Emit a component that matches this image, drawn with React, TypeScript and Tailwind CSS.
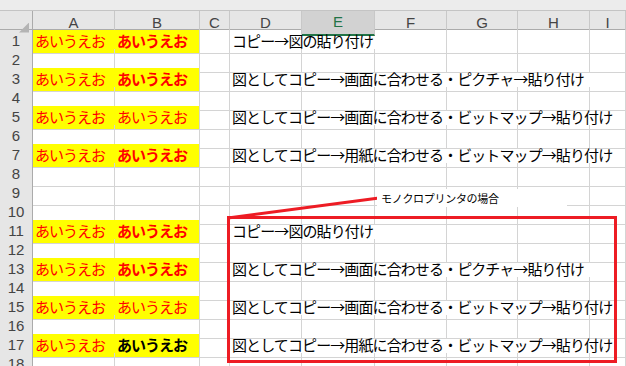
import React from "react";

const COLS = "33px 82px 85px 30px 72px 73px 72px 71px 72px 1fr";
const LETTERS = ["A", "B", "C", "D", "E", "F", "G", "H", "I"];
const FONT = { fontFamily: '"Noto Sans CJK JP", "Noto Sans", sans-serif' };

const TEXTS: Record<string, string> = {
  copy: "コピー→図の貼り付け",
  pict: "図としてコピー→画面に合わせる・ピクチャ→貼り付け",
  bmp: "図としてコピー→画面に合わせる・ビットマップ→貼り付け",
  paper: "図としてコピー→用紙に合わせる・ビットマップ→貼り付け",
};

interface RowSpec {
  b?: "bold" | "regular" | "black";
  d?: keyof typeof TEXTS;
}

const ROWS: Record<number, RowSpec> = {
  1: { b: "bold", d: "copy" },
  3: { b: "bold", d: "pict" },
  5: { b: "regular", d: "bmp" },
  7: { b: "bold", d: "paper" },
  11: { b: "bold", d: "copy" },
  13: { b: "bold", d: "pict" },
  15: { b: "regular", d: "bmp" },
  17: { b: "black", d: "paper" },
};

const cell = "border-r border-b border-[#d4d4d4]";

const Row = ({ n }: { n: number }) => {
  const spec = ROWS[n];
  const short = spec?.d === "copy";
  return (
    <div className="grid h-[19px]" style={{ gridTemplateColumns: COLS }}>
      <div className="flex items-center justify-center bg-[#e6e6e6] border-r border-r-[#ababab] border-b border-b-[#cfcfcf] text-[15px] text-[#444]" style={{ fontFamily: '"Liberation Sans", sans-serif' }}>
        {n}
      </div>
      {spec ? (
        <>
          <div className="flex items-center bg-[#ffff00] border-b border-[#d4d4d4] pl-[2px] text-[15px] tracking-[-1px] text-[#ff0000]" style={FONT}>
            あいうえお
          </div>
          <div
            className={`flex items-center bg-[#ffff00] ${cell} pl-[2px] text-[15px] tracking-[-1px] ${
              spec.b === "regular" ? "text-[#ff0000]" : spec.b === "black" ? "font-bold text-black" : "font-bold text-[#ff0000]"
            }`}
            style={FONT}
          >
            あいうえお
          </div>
          <div className={cell} />
          <div
            className={`flex items-center whitespace-nowrap overflow-hidden ${cell} pl-[2px] text-[15px] tracking-[-0.9px] text-black ${
              short ? "col-span-3" : "col-span-6"
            }`}
            style={FONT}
          >
            {TEXTS[spec.d!]}
          </div>
          {short && (
            <>
              <div className={cell} />
              <div className={cell} />
              <div className={cell} />
            </>
          )}
        </>
      ) : (
        Array.from({ length: 9 }).map((_, i) => <div key={i} className={cell} />)
      )}
    </div>
  );
};

export default function App() {
  return (
    <div className="relative w-[626px] h-[366px] overflow-hidden bg-white">
      <div className="h-[11px] bg-[#ececec] border-b border-[#c4c4c4]" />
      <div className="grid h-[19px] bg-[#e6e6e6] border-b border-[#ababab]" style={{ gridTemplateColumns: COLS }}>
        <div className="relative border-r border-[#ababab]">
          <div
            className="absolute right-[3px] bottom-[3px] w-[10px] h-[10px] bg-[#b4b4b4]"
            style={{ clipPath: "polygon(100% 0, 100% 100%, 0 100%)" }}
          />
        </div>
        {LETTERS.map((l) => (
          <div
            key={l}
            className={`flex items-center justify-center text-[15px] border-r border-[#c8c8c8] ${
              l === "E" ? "bg-[#d2d2d2] text-[#217346] border-b-2 border-b-[#217346]" : "text-[#444]"
            }`}
            style={{ fontFamily: '"Liberation Sans", sans-serif' }}
          >
            {l}
          </div>
        ))}
      </div>
      {Array.from({ length: 18 }).map((_, i) => (
        <Row key={i} n={i + 1} />
      ))}

      <svg className="absolute left-0 top-0" width="626" height="366">
        <line x1="228" y1="218" x2="379" y2="198" stroke="#ed1c24" strokeWidth="3" />
      </svg>
      <div className="absolute left-[227px] top-[216px] w-[390px] h-[147px] border-[3px] border-[#ed1c24]" />
      <div
        className="absolute left-[377px] top-[189px] w-[190px] h-[18px] bg-white flex items-center pl-[4px] text-[11px] tracking-[-0.3px] text-black"
        style={FONT}
      >
        モノクロプリンタの場合
      </div>
    </div>
  );
}
